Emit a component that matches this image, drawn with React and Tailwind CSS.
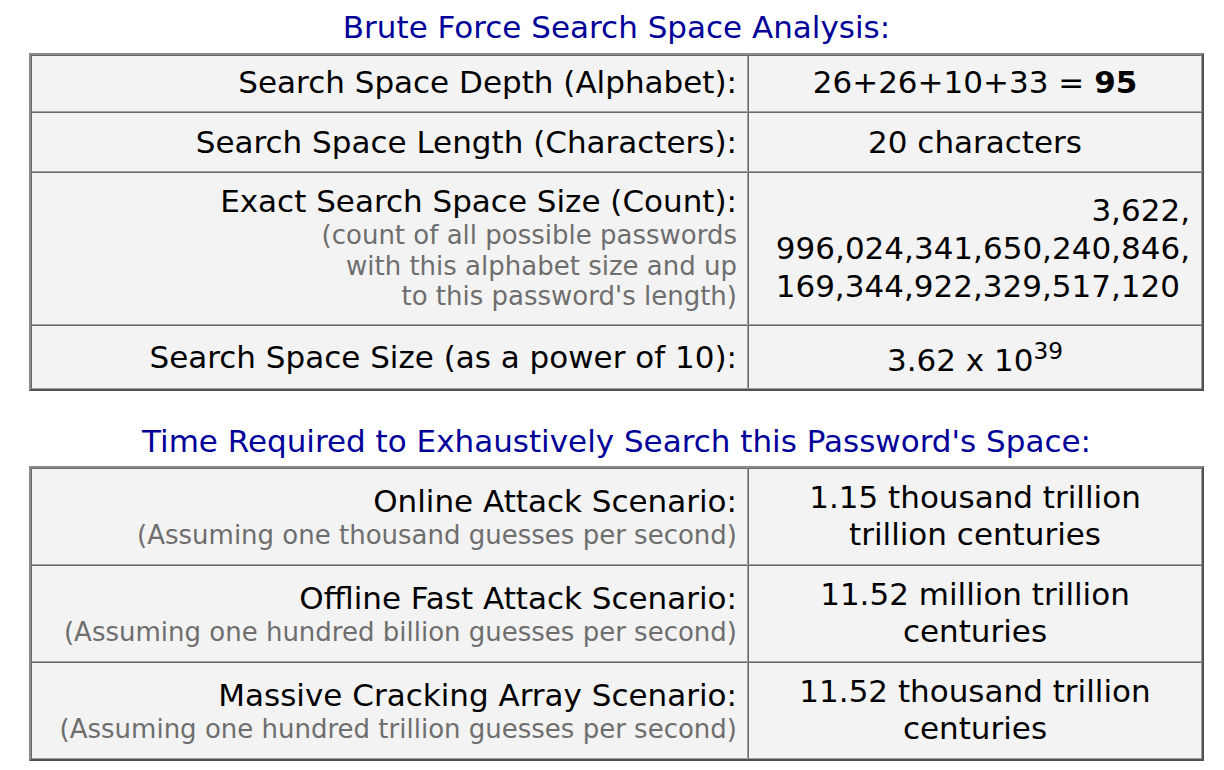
import React from "react";

const font = { fontFamily: '"DejaVu Sans", Verdana, sans-serif' };

const tableCls =
  "ml-[29px] w-[1175px] table-fixed border-separate border-spacing-0 border-2 border-t-[#8a8a8a] border-l-[#8a8a8a] border-b-[#505050] border-r-[#505050] text-[31px] leading-[38px] text-black";

const cellBase =
  "border border-t-[#696969] border-l-[#696969] border-b-[#a0a0a0] border-r-[#a0a0a0] bg-[#f3f3f3] align-middle";

const leftCls = `${cellBase} w-[717px] text-right pl-3 pr-[10px] py-[10px]`;
const rightCls = `${cellBase} text-center px-[10px] py-[10px]`;

function Note({ children }) {
  return <div className="text-[26px] leading-[30.5px] text-[#6e6e6e]">{children}</div>;
}

export default function App() {
  return (
    <div className="bg-white w-[1224px] min-h-[770px] pt-[8px]" style={font}>
      <div className="ml-[29px] w-[1175px] text-center text-[31px] leading-[38px] text-[#000099]">
        Brute Force Search Space Analysis:
      </div>
      <table className={`${tableCls} mt-[7px]`}>
        <tbody>
          <tr>
            <td className={`${cellBase} w-[717px] text-right pl-3 pr-[10px] pt-[7px] pb-[10px]`}>
              Search Space Depth (Alphabet):
            </td>
            <td className={`${cellBase} text-center px-[10px] pt-[7px] pb-[10px]`}>
              26+26+10+33 = <b className="font-bold">95</b>
            </td>
          </tr>
          <tr>
            <td className={leftCls}>Search Space Length (Characters):</td>
            <td className={rightCls}>20 characters</td>
          </tr>
          <tr>
            <td className={`${cellBase} w-[717px] text-right pl-3 pr-[10px] pt-[9px] pb-[12px]`}>
              <div>Exact Search Space Size (Count):</div>
              <Note>(count of all possible passwords</Note>
              <Note>with this alphabet size and up</Note>
              <Note>to this password's length)</Note>
            </td>
            <td className={`${cellBase} text-right pl-[10px] pr-[11px] py-[10px]`}>
              <div>3,622,</div>
              <div>996,024,341,650,240,846,</div>
              <div className="pr-[10px]">169,344,922,329,517,120</div>
            </td>
          </tr>
          <tr>
            <td className={`${cellBase} w-[717px] text-right pl-3 pr-[10px] py-[12px]`}>
              Search Space Size (as a power of 10):
            </td>
            <td className={`${cellBase} text-center px-[10px] pt-[15px] pb-[9px]`}>
              3.62 x 10<sup>39</sup>
            </td>
          </tr>
        </tbody>
      </table>

      <div className="ml-[29px] w-[1175px] mt-[31px] text-center text-[31px] leading-[38px] text-[#000099]">
        Time Required to Exhaustively Search this Password's Space:
      </div>
      <table className={`${tableCls} mt-[6px]`}>
        <tbody>
          <tr>
            <td className={leftCls}>
              <div>Online Attack Scenario:</div>
              <Note>(Assuming one thousand guesses per second)</Note>
            </td>
            <td className={`${rightCls} leading-[37.5px]`}>
              1.15 thousand trillion
              <br />
              trillion centuries
            </td>
          </tr>
          <tr>
            <td className={leftCls}>
              <div>Offline Fast Attack Scenario:</div>
              <Note>(Assuming one hundred billion guesses per second)</Note>
            </td>
            <td className={`${rightCls} leading-[37.5px]`}>
              11.52 million trillion
              <br />
              centuries
            </td>
          </tr>
          <tr>
            <td className={leftCls}>
              <div>Massive Cracking Array Scenario:</div>
              <Note>(Assuming one hundred trillion guesses per second)</Note>
            </td>
            <td className={`${rightCls} leading-[37.5px]`}>
              11.52 thousand trillion
              <br />
              centuries
            </td>
          </tr>
        </tbody>
      </table>
    </div>
  );
}
